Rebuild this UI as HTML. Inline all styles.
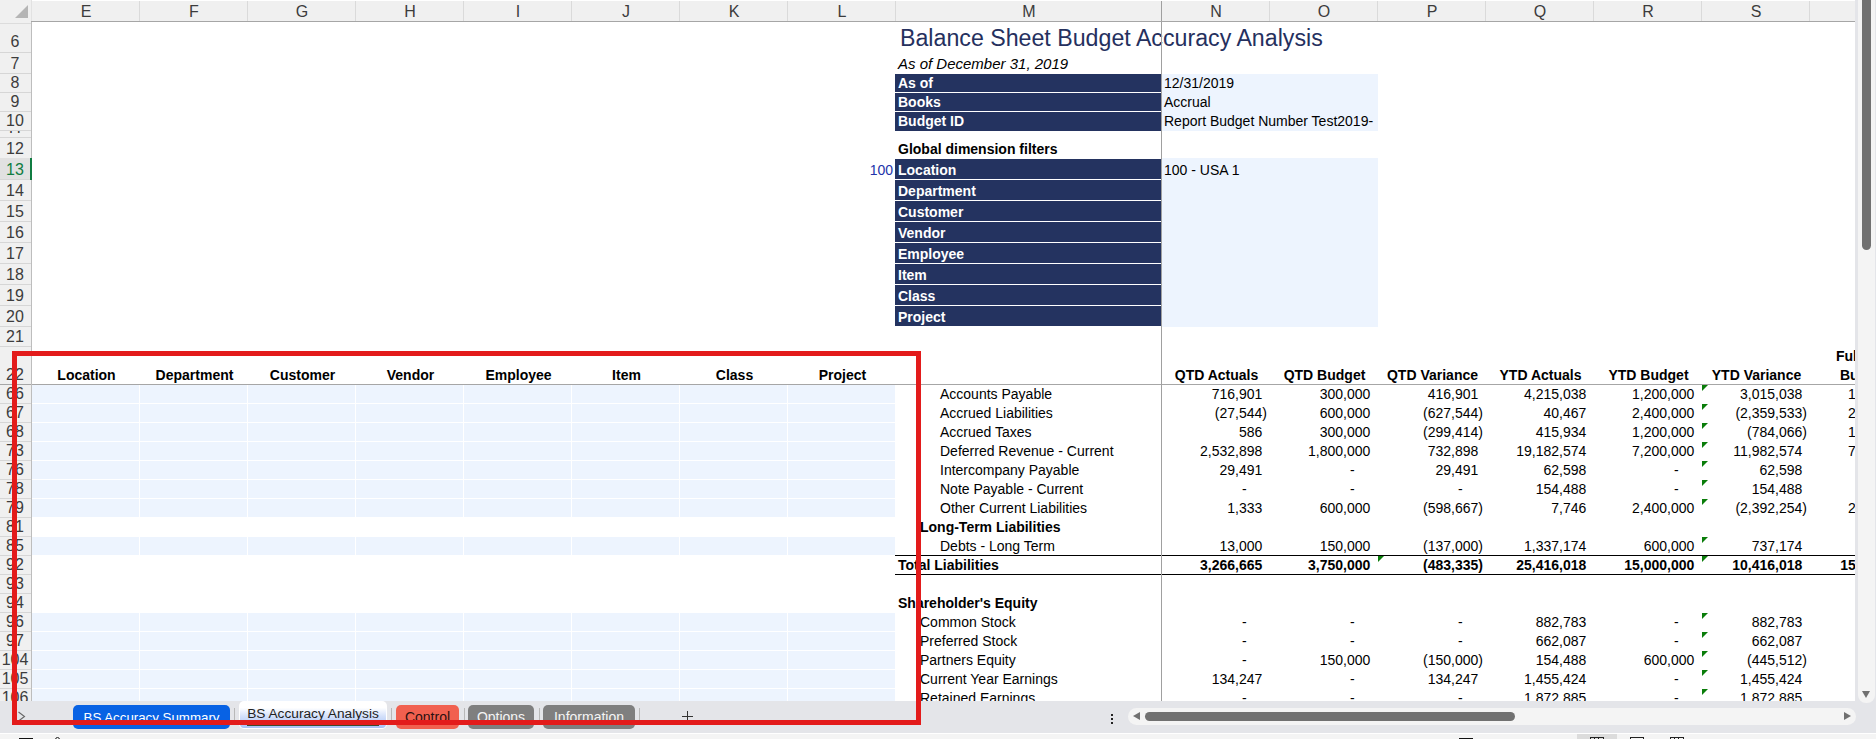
<!DOCTYPE html>
<html><head><meta charset="utf-8"><style>
html,body{margin:0;padding:0;}
body{width:1876px;height:739px;overflow:hidden;position:relative;background:#fff;font-family:"Liberation Sans", sans-serif;}
div{box-sizing:border-box;}
.h{visibility:hidden}
</style></head><body>
<div style="position:absolute;left:0;top:0;width:1855px;height:701px;overflow:hidden;">
<div style="position:absolute;left:32px;top:385px;width:107px;height:18px;background:#EDF4FE;"></div>
<div style="position:absolute;left:140px;top:385px;width:107px;height:18px;background:#EDF4FE;"></div>
<div style="position:absolute;left:248px;top:385px;width:107px;height:18px;background:#EDF4FE;"></div>
<div style="position:absolute;left:356px;top:385px;width:107px;height:18px;background:#EDF4FE;"></div>
<div style="position:absolute;left:464px;top:385px;width:107px;height:18px;background:#EDF4FE;"></div>
<div style="position:absolute;left:572px;top:385px;width:107px;height:18px;background:#EDF4FE;"></div>
<div style="position:absolute;left:680px;top:385px;width:107px;height:18px;background:#EDF4FE;"></div>
<div style="position:absolute;left:788px;top:385px;width:107px;height:18px;background:#EDF4FE;"></div>
<div style="position:absolute;left:32px;top:404px;width:107px;height:18px;background:#EDF4FE;"></div>
<div style="position:absolute;left:140px;top:404px;width:107px;height:18px;background:#EDF4FE;"></div>
<div style="position:absolute;left:248px;top:404px;width:107px;height:18px;background:#EDF4FE;"></div>
<div style="position:absolute;left:356px;top:404px;width:107px;height:18px;background:#EDF4FE;"></div>
<div style="position:absolute;left:464px;top:404px;width:107px;height:18px;background:#EDF4FE;"></div>
<div style="position:absolute;left:572px;top:404px;width:107px;height:18px;background:#EDF4FE;"></div>
<div style="position:absolute;left:680px;top:404px;width:107px;height:18px;background:#EDF4FE;"></div>
<div style="position:absolute;left:788px;top:404px;width:107px;height:18px;background:#EDF4FE;"></div>
<div style="position:absolute;left:32px;top:423px;width:107px;height:18px;background:#EDF4FE;"></div>
<div style="position:absolute;left:140px;top:423px;width:107px;height:18px;background:#EDF4FE;"></div>
<div style="position:absolute;left:248px;top:423px;width:107px;height:18px;background:#EDF4FE;"></div>
<div style="position:absolute;left:356px;top:423px;width:107px;height:18px;background:#EDF4FE;"></div>
<div style="position:absolute;left:464px;top:423px;width:107px;height:18px;background:#EDF4FE;"></div>
<div style="position:absolute;left:572px;top:423px;width:107px;height:18px;background:#EDF4FE;"></div>
<div style="position:absolute;left:680px;top:423px;width:107px;height:18px;background:#EDF4FE;"></div>
<div style="position:absolute;left:788px;top:423px;width:107px;height:18px;background:#EDF4FE;"></div>
<div style="position:absolute;left:32px;top:442px;width:107px;height:18px;background:#EDF4FE;"></div>
<div style="position:absolute;left:140px;top:442px;width:107px;height:18px;background:#EDF4FE;"></div>
<div style="position:absolute;left:248px;top:442px;width:107px;height:18px;background:#EDF4FE;"></div>
<div style="position:absolute;left:356px;top:442px;width:107px;height:18px;background:#EDF4FE;"></div>
<div style="position:absolute;left:464px;top:442px;width:107px;height:18px;background:#EDF4FE;"></div>
<div style="position:absolute;left:572px;top:442px;width:107px;height:18px;background:#EDF4FE;"></div>
<div style="position:absolute;left:680px;top:442px;width:107px;height:18px;background:#EDF4FE;"></div>
<div style="position:absolute;left:788px;top:442px;width:107px;height:18px;background:#EDF4FE;"></div>
<div style="position:absolute;left:32px;top:461px;width:107px;height:18px;background:#EDF4FE;"></div>
<div style="position:absolute;left:140px;top:461px;width:107px;height:18px;background:#EDF4FE;"></div>
<div style="position:absolute;left:248px;top:461px;width:107px;height:18px;background:#EDF4FE;"></div>
<div style="position:absolute;left:356px;top:461px;width:107px;height:18px;background:#EDF4FE;"></div>
<div style="position:absolute;left:464px;top:461px;width:107px;height:18px;background:#EDF4FE;"></div>
<div style="position:absolute;left:572px;top:461px;width:107px;height:18px;background:#EDF4FE;"></div>
<div style="position:absolute;left:680px;top:461px;width:107px;height:18px;background:#EDF4FE;"></div>
<div style="position:absolute;left:788px;top:461px;width:107px;height:18px;background:#EDF4FE;"></div>
<div style="position:absolute;left:32px;top:480px;width:107px;height:18px;background:#EDF4FE;"></div>
<div style="position:absolute;left:140px;top:480px;width:107px;height:18px;background:#EDF4FE;"></div>
<div style="position:absolute;left:248px;top:480px;width:107px;height:18px;background:#EDF4FE;"></div>
<div style="position:absolute;left:356px;top:480px;width:107px;height:18px;background:#EDF4FE;"></div>
<div style="position:absolute;left:464px;top:480px;width:107px;height:18px;background:#EDF4FE;"></div>
<div style="position:absolute;left:572px;top:480px;width:107px;height:18px;background:#EDF4FE;"></div>
<div style="position:absolute;left:680px;top:480px;width:107px;height:18px;background:#EDF4FE;"></div>
<div style="position:absolute;left:788px;top:480px;width:107px;height:18px;background:#EDF4FE;"></div>
<div style="position:absolute;left:32px;top:499px;width:107px;height:18px;background:#EDF4FE;"></div>
<div style="position:absolute;left:140px;top:499px;width:107px;height:18px;background:#EDF4FE;"></div>
<div style="position:absolute;left:248px;top:499px;width:107px;height:18px;background:#EDF4FE;"></div>
<div style="position:absolute;left:356px;top:499px;width:107px;height:18px;background:#EDF4FE;"></div>
<div style="position:absolute;left:464px;top:499px;width:107px;height:18px;background:#EDF4FE;"></div>
<div style="position:absolute;left:572px;top:499px;width:107px;height:18px;background:#EDF4FE;"></div>
<div style="position:absolute;left:680px;top:499px;width:107px;height:18px;background:#EDF4FE;"></div>
<div style="position:absolute;left:788px;top:499px;width:107px;height:18px;background:#EDF4FE;"></div>
<div style="position:absolute;left:32px;top:537px;width:107px;height:18px;background:#EDF4FE;"></div>
<div style="position:absolute;left:140px;top:537px;width:107px;height:18px;background:#EDF4FE;"></div>
<div style="position:absolute;left:248px;top:537px;width:107px;height:18px;background:#EDF4FE;"></div>
<div style="position:absolute;left:356px;top:537px;width:107px;height:18px;background:#EDF4FE;"></div>
<div style="position:absolute;left:464px;top:537px;width:107px;height:18px;background:#EDF4FE;"></div>
<div style="position:absolute;left:572px;top:537px;width:107px;height:18px;background:#EDF4FE;"></div>
<div style="position:absolute;left:680px;top:537px;width:107px;height:18px;background:#EDF4FE;"></div>
<div style="position:absolute;left:788px;top:537px;width:107px;height:18px;background:#EDF4FE;"></div>
<div style="position:absolute;left:32px;top:613px;width:107px;height:18px;background:#EDF4FE;"></div>
<div style="position:absolute;left:140px;top:613px;width:107px;height:18px;background:#EDF4FE;"></div>
<div style="position:absolute;left:248px;top:613px;width:107px;height:18px;background:#EDF4FE;"></div>
<div style="position:absolute;left:356px;top:613px;width:107px;height:18px;background:#EDF4FE;"></div>
<div style="position:absolute;left:464px;top:613px;width:107px;height:18px;background:#EDF4FE;"></div>
<div style="position:absolute;left:572px;top:613px;width:107px;height:18px;background:#EDF4FE;"></div>
<div style="position:absolute;left:680px;top:613px;width:107px;height:18px;background:#EDF4FE;"></div>
<div style="position:absolute;left:788px;top:613px;width:107px;height:18px;background:#EDF4FE;"></div>
<div style="position:absolute;left:32px;top:632px;width:107px;height:18px;background:#EDF4FE;"></div>
<div style="position:absolute;left:140px;top:632px;width:107px;height:18px;background:#EDF4FE;"></div>
<div style="position:absolute;left:248px;top:632px;width:107px;height:18px;background:#EDF4FE;"></div>
<div style="position:absolute;left:356px;top:632px;width:107px;height:18px;background:#EDF4FE;"></div>
<div style="position:absolute;left:464px;top:632px;width:107px;height:18px;background:#EDF4FE;"></div>
<div style="position:absolute;left:572px;top:632px;width:107px;height:18px;background:#EDF4FE;"></div>
<div style="position:absolute;left:680px;top:632px;width:107px;height:18px;background:#EDF4FE;"></div>
<div style="position:absolute;left:788px;top:632px;width:107px;height:18px;background:#EDF4FE;"></div>
<div style="position:absolute;left:32px;top:651px;width:107px;height:18px;background:#EDF4FE;"></div>
<div style="position:absolute;left:140px;top:651px;width:107px;height:18px;background:#EDF4FE;"></div>
<div style="position:absolute;left:248px;top:651px;width:107px;height:18px;background:#EDF4FE;"></div>
<div style="position:absolute;left:356px;top:651px;width:107px;height:18px;background:#EDF4FE;"></div>
<div style="position:absolute;left:464px;top:651px;width:107px;height:18px;background:#EDF4FE;"></div>
<div style="position:absolute;left:572px;top:651px;width:107px;height:18px;background:#EDF4FE;"></div>
<div style="position:absolute;left:680px;top:651px;width:107px;height:18px;background:#EDF4FE;"></div>
<div style="position:absolute;left:788px;top:651px;width:107px;height:18px;background:#EDF4FE;"></div>
<div style="position:absolute;left:32px;top:670px;width:107px;height:18px;background:#EDF4FE;"></div>
<div style="position:absolute;left:140px;top:670px;width:107px;height:18px;background:#EDF4FE;"></div>
<div style="position:absolute;left:248px;top:670px;width:107px;height:18px;background:#EDF4FE;"></div>
<div style="position:absolute;left:356px;top:670px;width:107px;height:18px;background:#EDF4FE;"></div>
<div style="position:absolute;left:464px;top:670px;width:107px;height:18px;background:#EDF4FE;"></div>
<div style="position:absolute;left:572px;top:670px;width:107px;height:18px;background:#EDF4FE;"></div>
<div style="position:absolute;left:680px;top:670px;width:107px;height:18px;background:#EDF4FE;"></div>
<div style="position:absolute;left:788px;top:670px;width:107px;height:18px;background:#EDF4FE;"></div>
<div style="position:absolute;left:32px;top:689px;width:107px;height:18px;background:#EDF4FE;"></div>
<div style="position:absolute;left:140px;top:689px;width:107px;height:18px;background:#EDF4FE;"></div>
<div style="position:absolute;left:248px;top:689px;width:107px;height:18px;background:#EDF4FE;"></div>
<div style="position:absolute;left:356px;top:689px;width:107px;height:18px;background:#EDF4FE;"></div>
<div style="position:absolute;left:464px;top:689px;width:107px;height:18px;background:#EDF4FE;"></div>
<div style="position:absolute;left:572px;top:689px;width:107px;height:18px;background:#EDF4FE;"></div>
<div style="position:absolute;left:680px;top:689px;width:107px;height:18px;background:#EDF4FE;"></div>
<div style="position:absolute;left:788px;top:689px;width:107px;height:18px;background:#EDF4FE;"></div>
<div style="position:absolute;left:895px;top:74px;width:266px;height:18px;background:#243360;"></div>
<div style="position:absolute;left:895px;top:93px;width:266px;height:18px;background:#243360;"></div>
<div style="position:absolute;left:895px;top:112px;width:266px;height:19px;background:#243360;"></div>
<div style="position:absolute;left:895px;top:159px;width:266px;height:20px;background:#243360;"></div>
<div style="position:absolute;left:895px;top:180px;width:266px;height:20px;background:#243360;"></div>
<div style="position:absolute;left:895px;top:201px;width:266px;height:20px;background:#243360;"></div>
<div style="position:absolute;left:895px;top:222px;width:266px;height:20px;background:#243360;"></div>
<div style="position:absolute;left:895px;top:243px;width:266px;height:20px;background:#243360;"></div>
<div style="position:absolute;left:895px;top:264px;width:266px;height:20px;background:#243360;"></div>
<div style="position:absolute;left:895px;top:285px;width:266px;height:20px;background:#243360;"></div>
<div style="position:absolute;left:895px;top:306px;width:266px;height:20px;background:#243360;"></div>
<div style="position:absolute;left:1162px;top:74px;width:216px;height:57px;background:#EDF4FE;"></div>
<div style="position:absolute;left:1162px;top:158px;width:216px;height:169px;background:#EDF4FE;"></div>
<div style="position:absolute;left:900px;top:27.63px;height:20px;line-height:20px;font-size:23px;font-weight:normal;font-style:normal;color:#25305E;white-space:pre;transform:scaleX(1.008);transform-origin:0 0;">Balance Sheet Budget Accuracy Analysis</div>
<div style="position:absolute;left:898px;top:54.30px;height:20px;line-height:20px;font-size:15px;font-weight:normal;font-style:italic;color:#000;white-space:pre;">As of December 31, 2019</div>
<div style="position:absolute;left:898px;top:73.15px;height:20px;line-height:20px;font-size:14px;font-weight:bold;font-style:normal;color:#fff;white-space:pre;">As of</div>
<div style="position:absolute;left:898px;top:92.15px;height:20px;line-height:20px;font-size:14px;font-weight:bold;font-style:normal;color:#fff;white-space:pre;">Books</div>
<div style="position:absolute;left:898px;top:111.15px;height:20px;line-height:20px;font-size:14px;font-weight:bold;font-style:normal;color:#fff;white-space:pre;">Budget ID</div>
<div style="position:absolute;left:1164px;top:73.15px;height:20px;line-height:20px;font-size:14px;font-weight:normal;font-style:normal;color:#000;white-space:pre;">12/31/2019</div>
<div style="position:absolute;left:1164px;top:92.15px;height:20px;line-height:20px;font-size:14px;font-weight:normal;font-style:normal;color:#000;white-space:pre;">Accrual</div>
<div style="position:absolute;left:1164px;top:111.15px;height:20px;line-height:20px;font-size:14px;font-weight:normal;font-style:normal;color:#000;white-space:pre;">Report Budget Number Test2019-</div>
<div style="position:absolute;left:898px;top:138.65px;height:20px;line-height:20px;font-size:14px;font-weight:bold;font-style:normal;color:#000;white-space:pre;">Global dimension filters</div>
<div style="position:absolute;left:898px;top:160.15px;height:20px;line-height:20px;font-size:14px;font-weight:bold;font-style:normal;color:#fff;white-space:pre;">Location</div>
<div style="position:absolute;left:898px;top:181.15px;height:20px;line-height:20px;font-size:14px;font-weight:bold;font-style:normal;color:#fff;white-space:pre;">Department</div>
<div style="position:absolute;left:898px;top:202.15px;height:20px;line-height:20px;font-size:14px;font-weight:bold;font-style:normal;color:#fff;white-space:pre;">Customer</div>
<div style="position:absolute;left:898px;top:223.15px;height:20px;line-height:20px;font-size:14px;font-weight:bold;font-style:normal;color:#fff;white-space:pre;">Vendor</div>
<div style="position:absolute;left:898px;top:244.15px;height:20px;line-height:20px;font-size:14px;font-weight:bold;font-style:normal;color:#fff;white-space:pre;">Employee</div>
<div style="position:absolute;left:898px;top:265.15px;height:20px;line-height:20px;font-size:14px;font-weight:bold;font-style:normal;color:#fff;white-space:pre;">Item</div>
<div style="position:absolute;left:898px;top:286.15px;height:20px;line-height:20px;font-size:14px;font-weight:bold;font-style:normal;color:#fff;white-space:pre;">Class</div>
<div style="position:absolute;left:898px;top:307.15px;height:20px;line-height:20px;font-size:14px;font-weight:bold;font-style:normal;color:#fff;white-space:pre;">Project</div>
<div style="position:absolute;left:293px;width:600px;text-align:right;top:160.15px;height:20px;line-height:20px;font-size:14px;font-weight:normal;font-style:normal;color:#2233AA;white-space:pre;">100</div>
<div style="position:absolute;left:1164px;top:160.15px;height:20px;line-height:20px;font-size:14px;font-weight:normal;font-style:normal;color:#000;white-space:pre;">100 - USA 1</div>
<div style="position:absolute;left:-213.5px;width:600px;text-align:center;top:365.15px;height:20px;line-height:20px;font-size:14px;font-weight:bold;font-style:normal;color:#000;white-space:pre;">Location</div>
<div style="position:absolute;left:-105.5px;width:600px;text-align:center;top:365.15px;height:20px;line-height:20px;font-size:14px;font-weight:bold;font-style:normal;color:#000;white-space:pre;">Department</div>
<div style="position:absolute;left:2.5px;width:600px;text-align:center;top:365.15px;height:20px;line-height:20px;font-size:14px;font-weight:bold;font-style:normal;color:#000;white-space:pre;">Customer</div>
<div style="position:absolute;left:110.5px;width:600px;text-align:center;top:365.15px;height:20px;line-height:20px;font-size:14px;font-weight:bold;font-style:normal;color:#000;white-space:pre;">Vendor</div>
<div style="position:absolute;left:218.5px;width:600px;text-align:center;top:365.15px;height:20px;line-height:20px;font-size:14px;font-weight:bold;font-style:normal;color:#000;white-space:pre;">Employee</div>
<div style="position:absolute;left:326.5px;width:600px;text-align:center;top:365.15px;height:20px;line-height:20px;font-size:14px;font-weight:bold;font-style:normal;color:#000;white-space:pre;">Item</div>
<div style="position:absolute;left:434.5px;width:600px;text-align:center;top:365.15px;height:20px;line-height:20px;font-size:14px;font-weight:bold;font-style:normal;color:#000;white-space:pre;">Class</div>
<div style="position:absolute;left:542.5px;width:600px;text-align:center;top:365.15px;height:20px;line-height:20px;font-size:14px;font-weight:bold;font-style:normal;color:#000;white-space:pre;">Project</div>
<div style="position:absolute;left:916.5px;width:600px;text-align:center;top:365.15px;height:20px;line-height:20px;font-size:14px;font-weight:bold;font-style:normal;color:#000;white-space:pre;">QTD Actuals</div>
<div style="position:absolute;left:1024.5px;width:600px;text-align:center;top:365.15px;height:20px;line-height:20px;font-size:14px;font-weight:bold;font-style:normal;color:#000;white-space:pre;">QTD Budget</div>
<div style="position:absolute;left:1132.5px;width:600px;text-align:center;top:365.15px;height:20px;line-height:20px;font-size:14px;font-weight:bold;font-style:normal;color:#000;white-space:pre;">QTD Variance</div>
<div style="position:absolute;left:1240.5px;width:600px;text-align:center;top:365.15px;height:20px;line-height:20px;font-size:14px;font-weight:bold;font-style:normal;color:#000;white-space:pre;">YTD Actuals</div>
<div style="position:absolute;left:1348.5px;width:600px;text-align:center;top:365.15px;height:20px;line-height:20px;font-size:14px;font-weight:bold;font-style:normal;color:#000;white-space:pre;">YTD Budget</div>
<div style="position:absolute;left:1456.5px;width:600px;text-align:center;top:365.15px;height:20px;line-height:20px;font-size:14px;font-weight:bold;font-style:normal;color:#000;white-space:pre;">YTD Variance</div>
<div style="position:absolute;left:1836px;top:346.15px;height:20px;line-height:20px;font-size:14px;font-weight:bold;font-style:normal;color:#000;white-space:pre;">Full</div>
<div style="position:absolute;left:1840px;top:365.15px;height:20px;line-height:20px;font-size:14px;font-weight:bold;font-style:normal;color:#000;white-space:pre;">Budget</div>
<div style="position:absolute;left:940px;top:383.95px;height:20px;line-height:20px;font-size:14px;font-weight:normal;font-style:normal;color:#000;white-space:pre;">Accounts Payable</div>
<div style="position:absolute;left:667px;width:600px;text-align:right;top:383.95px;height:20px;line-height:20px;font-size:14px;font-weight:normal;font-style:normal;color:#000;white-space:pre;">716,901<span class="h">)</span></div>
<div style="position:absolute;left:775px;width:600px;text-align:right;top:383.95px;height:20px;line-height:20px;font-size:14px;font-weight:normal;font-style:normal;color:#000;white-space:pre;">300,000<span class="h">)</span></div>
<div style="position:absolute;left:883px;width:600px;text-align:right;top:383.95px;height:20px;line-height:20px;font-size:14px;font-weight:normal;font-style:normal;color:#000;white-space:pre;">416,901<span class="h">)</span></div>
<div style="position:absolute;left:991px;width:600px;text-align:right;top:383.95px;height:20px;line-height:20px;font-size:14px;font-weight:normal;font-style:normal;color:#000;white-space:pre;">4,215,038<span class="h">)</span></div>
<div style="position:absolute;left:1099px;width:600px;text-align:right;top:383.95px;height:20px;line-height:20px;font-size:14px;font-weight:normal;font-style:normal;color:#000;white-space:pre;">1,200,000<span class="h">)</span></div>
<div style="position:absolute;left:1207px;width:600px;text-align:right;top:383.95px;height:20px;line-height:20px;font-size:14px;font-weight:normal;font-style:normal;color:#000;white-space:pre;">3,015,038<span class="h">)</span></div>
<div style="position:absolute;left:1315px;width:600px;text-align:right;top:383.95px;height:20px;line-height:20px;font-size:14px;font-weight:normal;font-style:normal;color:#000;white-space:pre;">1,200,000<span class="h">)</span></div>
<div style="position:absolute;left:940px;top:402.95px;height:20px;line-height:20px;font-size:14px;font-weight:normal;font-style:normal;color:#000;white-space:pre;">Accrued Liabilities</div>
<div style="position:absolute;left:667px;width:600px;text-align:right;top:402.95px;height:20px;line-height:20px;font-size:14px;font-weight:normal;font-style:normal;color:#000;white-space:pre;">(27,544)</div>
<div style="position:absolute;left:775px;width:600px;text-align:right;top:402.95px;height:20px;line-height:20px;font-size:14px;font-weight:normal;font-style:normal;color:#000;white-space:pre;">600,000<span class="h">)</span></div>
<div style="position:absolute;left:883px;width:600px;text-align:right;top:402.95px;height:20px;line-height:20px;font-size:14px;font-weight:normal;font-style:normal;color:#000;white-space:pre;">(627,544)</div>
<div style="position:absolute;left:991px;width:600px;text-align:right;top:402.95px;height:20px;line-height:20px;font-size:14px;font-weight:normal;font-style:normal;color:#000;white-space:pre;">40,467<span class="h">)</span></div>
<div style="position:absolute;left:1099px;width:600px;text-align:right;top:402.95px;height:20px;line-height:20px;font-size:14px;font-weight:normal;font-style:normal;color:#000;white-space:pre;">2,400,000<span class="h">)</span></div>
<div style="position:absolute;left:1207px;width:600px;text-align:right;top:402.95px;height:20px;line-height:20px;font-size:14px;font-weight:normal;font-style:normal;color:#000;white-space:pre;">(2,359,533)</div>
<div style="position:absolute;left:1315px;width:600px;text-align:right;top:402.95px;height:20px;line-height:20px;font-size:14px;font-weight:normal;font-style:normal;color:#000;white-space:pre;">2,400,000<span class="h">)</span></div>
<div style="position:absolute;left:940px;top:421.95px;height:20px;line-height:20px;font-size:14px;font-weight:normal;font-style:normal;color:#000;white-space:pre;">Accrued Taxes</div>
<div style="position:absolute;left:667px;width:600px;text-align:right;top:421.95px;height:20px;line-height:20px;font-size:14px;font-weight:normal;font-style:normal;color:#000;white-space:pre;">586<span class="h">)</span></div>
<div style="position:absolute;left:775px;width:600px;text-align:right;top:421.95px;height:20px;line-height:20px;font-size:14px;font-weight:normal;font-style:normal;color:#000;white-space:pre;">300,000<span class="h">)</span></div>
<div style="position:absolute;left:883px;width:600px;text-align:right;top:421.95px;height:20px;line-height:20px;font-size:14px;font-weight:normal;font-style:normal;color:#000;white-space:pre;">(299,414)</div>
<div style="position:absolute;left:991px;width:600px;text-align:right;top:421.95px;height:20px;line-height:20px;font-size:14px;font-weight:normal;font-style:normal;color:#000;white-space:pre;">415,934<span class="h">)</span></div>
<div style="position:absolute;left:1099px;width:600px;text-align:right;top:421.95px;height:20px;line-height:20px;font-size:14px;font-weight:normal;font-style:normal;color:#000;white-space:pre;">1,200,000<span class="h">)</span></div>
<div style="position:absolute;left:1207px;width:600px;text-align:right;top:421.95px;height:20px;line-height:20px;font-size:14px;font-weight:normal;font-style:normal;color:#000;white-space:pre;">(784,066)</div>
<div style="position:absolute;left:1315px;width:600px;text-align:right;top:421.95px;height:20px;line-height:20px;font-size:14px;font-weight:normal;font-style:normal;color:#000;white-space:pre;">1,200,000<span class="h">)</span></div>
<div style="position:absolute;left:940px;top:440.95px;height:20px;line-height:20px;font-size:14px;font-weight:normal;font-style:normal;color:#000;white-space:pre;">Deferred Revenue - Current</div>
<div style="position:absolute;left:667px;width:600px;text-align:right;top:440.95px;height:20px;line-height:20px;font-size:14px;font-weight:normal;font-style:normal;color:#000;white-space:pre;">2,532,898<span class="h">)</span></div>
<div style="position:absolute;left:775px;width:600px;text-align:right;top:440.95px;height:20px;line-height:20px;font-size:14px;font-weight:normal;font-style:normal;color:#000;white-space:pre;">1,800,000<span class="h">)</span></div>
<div style="position:absolute;left:883px;width:600px;text-align:right;top:440.95px;height:20px;line-height:20px;font-size:14px;font-weight:normal;font-style:normal;color:#000;white-space:pre;">732,898<span class="h">)</span></div>
<div style="position:absolute;left:991px;width:600px;text-align:right;top:440.95px;height:20px;line-height:20px;font-size:14px;font-weight:normal;font-style:normal;color:#000;white-space:pre;">19,182,574<span class="h">)</span></div>
<div style="position:absolute;left:1099px;width:600px;text-align:right;top:440.95px;height:20px;line-height:20px;font-size:14px;font-weight:normal;font-style:normal;color:#000;white-space:pre;">7,200,000<span class="h">)</span></div>
<div style="position:absolute;left:1207px;width:600px;text-align:right;top:440.95px;height:20px;line-height:20px;font-size:14px;font-weight:normal;font-style:normal;color:#000;white-space:pre;">11,982,574<span class="h">)</span></div>
<div style="position:absolute;left:1315px;width:600px;text-align:right;top:440.95px;height:20px;line-height:20px;font-size:14px;font-weight:normal;font-style:normal;color:#000;white-space:pre;">7,200,000<span class="h">)</span></div>
<div style="position:absolute;left:940px;top:459.95px;height:20px;line-height:20px;font-size:14px;font-weight:normal;font-style:normal;color:#000;white-space:pre;">Intercompany Payable</div>
<div style="position:absolute;left:667px;width:600px;text-align:right;top:459.95px;height:20px;line-height:20px;font-size:14px;font-weight:normal;font-style:normal;color:#000;white-space:pre;">29,491<span class="h">)</span></div>
<div style="position:absolute;left:775px;width:600px;text-align:right;top:459.95px;height:20px;line-height:20px;font-size:14px;font-weight:normal;font-style:normal;color:#000;white-space:pre;">-<span class="h">00)</span></div>
<div style="position:absolute;left:883px;width:600px;text-align:right;top:459.95px;height:20px;line-height:20px;font-size:14px;font-weight:normal;font-style:normal;color:#000;white-space:pre;">29,491<span class="h">)</span></div>
<div style="position:absolute;left:991px;width:600px;text-align:right;top:459.95px;height:20px;line-height:20px;font-size:14px;font-weight:normal;font-style:normal;color:#000;white-space:pre;">62,598<span class="h">)</span></div>
<div style="position:absolute;left:1099px;width:600px;text-align:right;top:459.95px;height:20px;line-height:20px;font-size:14px;font-weight:normal;font-style:normal;color:#000;white-space:pre;">-<span class="h">00)</span></div>
<div style="position:absolute;left:1207px;width:600px;text-align:right;top:459.95px;height:20px;line-height:20px;font-size:14px;font-weight:normal;font-style:normal;color:#000;white-space:pre;">62,598<span class="h">)</span></div>
<div style="position:absolute;left:1315px;width:600px;text-align:right;top:459.95px;height:20px;line-height:20px;font-size:14px;font-weight:normal;font-style:normal;color:#000;white-space:pre;">-<span class="h">00)</span></div>
<div style="position:absolute;left:940px;top:478.95px;height:20px;line-height:20px;font-size:14px;font-weight:normal;font-style:normal;color:#000;white-space:pre;">Note Payable - Current</div>
<div style="position:absolute;left:667px;width:600px;text-align:right;top:478.95px;height:20px;line-height:20px;font-size:14px;font-weight:normal;font-style:normal;color:#000;white-space:pre;">-<span class="h">00)</span></div>
<div style="position:absolute;left:775px;width:600px;text-align:right;top:478.95px;height:20px;line-height:20px;font-size:14px;font-weight:normal;font-style:normal;color:#000;white-space:pre;">-<span class="h">00)</span></div>
<div style="position:absolute;left:883px;width:600px;text-align:right;top:478.95px;height:20px;line-height:20px;font-size:14px;font-weight:normal;font-style:normal;color:#000;white-space:pre;">-<span class="h">00)</span></div>
<div style="position:absolute;left:991px;width:600px;text-align:right;top:478.95px;height:20px;line-height:20px;font-size:14px;font-weight:normal;font-style:normal;color:#000;white-space:pre;">154,488<span class="h">)</span></div>
<div style="position:absolute;left:1099px;width:600px;text-align:right;top:478.95px;height:20px;line-height:20px;font-size:14px;font-weight:normal;font-style:normal;color:#000;white-space:pre;">-<span class="h">00)</span></div>
<div style="position:absolute;left:1207px;width:600px;text-align:right;top:478.95px;height:20px;line-height:20px;font-size:14px;font-weight:normal;font-style:normal;color:#000;white-space:pre;">154,488<span class="h">)</span></div>
<div style="position:absolute;left:1315px;width:600px;text-align:right;top:478.95px;height:20px;line-height:20px;font-size:14px;font-weight:normal;font-style:normal;color:#000;white-space:pre;">-<span class="h">00)</span></div>
<div style="position:absolute;left:940px;top:497.95px;height:20px;line-height:20px;font-size:14px;font-weight:normal;font-style:normal;color:#000;white-space:pre;">Other Current Liabilities</div>
<div style="position:absolute;left:667px;width:600px;text-align:right;top:497.95px;height:20px;line-height:20px;font-size:14px;font-weight:normal;font-style:normal;color:#000;white-space:pre;">1,333<span class="h">)</span></div>
<div style="position:absolute;left:775px;width:600px;text-align:right;top:497.95px;height:20px;line-height:20px;font-size:14px;font-weight:normal;font-style:normal;color:#000;white-space:pre;">600,000<span class="h">)</span></div>
<div style="position:absolute;left:883px;width:600px;text-align:right;top:497.95px;height:20px;line-height:20px;font-size:14px;font-weight:normal;font-style:normal;color:#000;white-space:pre;">(598,667)</div>
<div style="position:absolute;left:991px;width:600px;text-align:right;top:497.95px;height:20px;line-height:20px;font-size:14px;font-weight:normal;font-style:normal;color:#000;white-space:pre;">7,746<span class="h">)</span></div>
<div style="position:absolute;left:1099px;width:600px;text-align:right;top:497.95px;height:20px;line-height:20px;font-size:14px;font-weight:normal;font-style:normal;color:#000;white-space:pre;">2,400,000<span class="h">)</span></div>
<div style="position:absolute;left:1207px;width:600px;text-align:right;top:497.95px;height:20px;line-height:20px;font-size:14px;font-weight:normal;font-style:normal;color:#000;white-space:pre;">(2,392,254)</div>
<div style="position:absolute;left:1315px;width:600px;text-align:right;top:497.95px;height:20px;line-height:20px;font-size:14px;font-weight:normal;font-style:normal;color:#000;white-space:pre;">2,400,000<span class="h">)</span></div>
<div style="position:absolute;left:920px;top:516.95px;height:20px;line-height:20px;font-size:14px;font-weight:bold;font-style:normal;color:#000;white-space:pre;">Long-Term Liabilities</div>
<div style="position:absolute;left:940px;top:535.95px;height:20px;line-height:20px;font-size:14px;font-weight:normal;font-style:normal;color:#000;white-space:pre;">Debts - Long Term</div>
<div style="position:absolute;left:667px;width:600px;text-align:right;top:535.95px;height:20px;line-height:20px;font-size:14px;font-weight:normal;font-style:normal;color:#000;white-space:pre;">13,000<span class="h">)</span></div>
<div style="position:absolute;left:775px;width:600px;text-align:right;top:535.95px;height:20px;line-height:20px;font-size:14px;font-weight:normal;font-style:normal;color:#000;white-space:pre;">150,000<span class="h">)</span></div>
<div style="position:absolute;left:883px;width:600px;text-align:right;top:535.95px;height:20px;line-height:20px;font-size:14px;font-weight:normal;font-style:normal;color:#000;white-space:pre;">(137,000)</div>
<div style="position:absolute;left:991px;width:600px;text-align:right;top:535.95px;height:20px;line-height:20px;font-size:14px;font-weight:normal;font-style:normal;color:#000;white-space:pre;">1,337,174<span class="h">)</span></div>
<div style="position:absolute;left:1099px;width:600px;text-align:right;top:535.95px;height:20px;line-height:20px;font-size:14px;font-weight:normal;font-style:normal;color:#000;white-space:pre;">600,000<span class="h">)</span></div>
<div style="position:absolute;left:1207px;width:600px;text-align:right;top:535.95px;height:20px;line-height:20px;font-size:14px;font-weight:normal;font-style:normal;color:#000;white-space:pre;">737,174<span class="h">)</span></div>
<div style="position:absolute;left:1315px;width:600px;text-align:right;top:535.95px;height:20px;line-height:20px;font-size:14px;font-weight:normal;font-style:normal;color:#000;white-space:pre;">600,000<span class="h">)</span></div>
<div style="position:absolute;left:898px;top:554.95px;height:20px;line-height:20px;font-size:14px;font-weight:bold;font-style:normal;color:#000;white-space:pre;">Total Liabilities</div>
<div style="position:absolute;left:667px;width:600px;text-align:right;top:554.95px;height:20px;line-height:20px;font-size:14px;font-weight:bold;font-style:normal;color:#000;white-space:pre;">3,266,665<span class="h">)</span></div>
<div style="position:absolute;left:775px;width:600px;text-align:right;top:554.95px;height:20px;line-height:20px;font-size:14px;font-weight:bold;font-style:normal;color:#000;white-space:pre;">3,750,000<span class="h">)</span></div>
<div style="position:absolute;left:883px;width:600px;text-align:right;top:554.95px;height:20px;line-height:20px;font-size:14px;font-weight:bold;font-style:normal;color:#000;white-space:pre;">(483,335)</div>
<div style="position:absolute;left:991px;width:600px;text-align:right;top:554.95px;height:20px;line-height:20px;font-size:14px;font-weight:bold;font-style:normal;color:#000;white-space:pre;">25,416,018<span class="h">)</span></div>
<div style="position:absolute;left:1099px;width:600px;text-align:right;top:554.95px;height:20px;line-height:20px;font-size:14px;font-weight:bold;font-style:normal;color:#000;white-space:pre;">15,000,000<span class="h">)</span></div>
<div style="position:absolute;left:1207px;width:600px;text-align:right;top:554.95px;height:20px;line-height:20px;font-size:14px;font-weight:bold;font-style:normal;color:#000;white-space:pre;">10,416,018<span class="h">)</span></div>
<div style="position:absolute;left:1315px;width:600px;text-align:right;top:554.95px;height:20px;line-height:20px;font-size:14px;font-weight:bold;font-style:normal;color:#000;white-space:pre;">15,000,000<span class="h">)</span></div>
<div style="position:absolute;left:898px;top:592.95px;height:20px;line-height:20px;font-size:14px;font-weight:bold;font-style:normal;color:#000;white-space:pre;">Shareholder's Equity</div>
<div style="position:absolute;left:920px;top:611.95px;height:20px;line-height:20px;font-size:14px;font-weight:normal;font-style:normal;color:#000;white-space:pre;">Common Stock</div>
<div style="position:absolute;left:667px;width:600px;text-align:right;top:611.95px;height:20px;line-height:20px;font-size:14px;font-weight:normal;font-style:normal;color:#000;white-space:pre;">-<span class="h">00)</span></div>
<div style="position:absolute;left:775px;width:600px;text-align:right;top:611.95px;height:20px;line-height:20px;font-size:14px;font-weight:normal;font-style:normal;color:#000;white-space:pre;">-<span class="h">00)</span></div>
<div style="position:absolute;left:883px;width:600px;text-align:right;top:611.95px;height:20px;line-height:20px;font-size:14px;font-weight:normal;font-style:normal;color:#000;white-space:pre;">-<span class="h">00)</span></div>
<div style="position:absolute;left:991px;width:600px;text-align:right;top:611.95px;height:20px;line-height:20px;font-size:14px;font-weight:normal;font-style:normal;color:#000;white-space:pre;">882,783<span class="h">)</span></div>
<div style="position:absolute;left:1099px;width:600px;text-align:right;top:611.95px;height:20px;line-height:20px;font-size:14px;font-weight:normal;font-style:normal;color:#000;white-space:pre;">-<span class="h">00)</span></div>
<div style="position:absolute;left:1207px;width:600px;text-align:right;top:611.95px;height:20px;line-height:20px;font-size:14px;font-weight:normal;font-style:normal;color:#000;white-space:pre;">882,783<span class="h">)</span></div>
<div style="position:absolute;left:1315px;width:600px;text-align:right;top:611.95px;height:20px;line-height:20px;font-size:14px;font-weight:normal;font-style:normal;color:#000;white-space:pre;">-<span class="h">00)</span></div>
<div style="position:absolute;left:920px;top:630.95px;height:20px;line-height:20px;font-size:14px;font-weight:normal;font-style:normal;color:#000;white-space:pre;">Preferred Stock</div>
<div style="position:absolute;left:667px;width:600px;text-align:right;top:630.95px;height:20px;line-height:20px;font-size:14px;font-weight:normal;font-style:normal;color:#000;white-space:pre;">-<span class="h">00)</span></div>
<div style="position:absolute;left:775px;width:600px;text-align:right;top:630.95px;height:20px;line-height:20px;font-size:14px;font-weight:normal;font-style:normal;color:#000;white-space:pre;">-<span class="h">00)</span></div>
<div style="position:absolute;left:883px;width:600px;text-align:right;top:630.95px;height:20px;line-height:20px;font-size:14px;font-weight:normal;font-style:normal;color:#000;white-space:pre;">-<span class="h">00)</span></div>
<div style="position:absolute;left:991px;width:600px;text-align:right;top:630.95px;height:20px;line-height:20px;font-size:14px;font-weight:normal;font-style:normal;color:#000;white-space:pre;">662,087<span class="h">)</span></div>
<div style="position:absolute;left:1099px;width:600px;text-align:right;top:630.95px;height:20px;line-height:20px;font-size:14px;font-weight:normal;font-style:normal;color:#000;white-space:pre;">-<span class="h">00)</span></div>
<div style="position:absolute;left:1207px;width:600px;text-align:right;top:630.95px;height:20px;line-height:20px;font-size:14px;font-weight:normal;font-style:normal;color:#000;white-space:pre;">662,087<span class="h">)</span></div>
<div style="position:absolute;left:1315px;width:600px;text-align:right;top:630.95px;height:20px;line-height:20px;font-size:14px;font-weight:normal;font-style:normal;color:#000;white-space:pre;">-<span class="h">00)</span></div>
<div style="position:absolute;left:920px;top:649.95px;height:20px;line-height:20px;font-size:14px;font-weight:normal;font-style:normal;color:#000;white-space:pre;">Partners Equity</div>
<div style="position:absolute;left:667px;width:600px;text-align:right;top:649.95px;height:20px;line-height:20px;font-size:14px;font-weight:normal;font-style:normal;color:#000;white-space:pre;">-<span class="h">00)</span></div>
<div style="position:absolute;left:775px;width:600px;text-align:right;top:649.95px;height:20px;line-height:20px;font-size:14px;font-weight:normal;font-style:normal;color:#000;white-space:pre;">150,000<span class="h">)</span></div>
<div style="position:absolute;left:883px;width:600px;text-align:right;top:649.95px;height:20px;line-height:20px;font-size:14px;font-weight:normal;font-style:normal;color:#000;white-space:pre;">(150,000)</div>
<div style="position:absolute;left:991px;width:600px;text-align:right;top:649.95px;height:20px;line-height:20px;font-size:14px;font-weight:normal;font-style:normal;color:#000;white-space:pre;">154,488<span class="h">)</span></div>
<div style="position:absolute;left:1099px;width:600px;text-align:right;top:649.95px;height:20px;line-height:20px;font-size:14px;font-weight:normal;font-style:normal;color:#000;white-space:pre;">600,000<span class="h">)</span></div>
<div style="position:absolute;left:1207px;width:600px;text-align:right;top:649.95px;height:20px;line-height:20px;font-size:14px;font-weight:normal;font-style:normal;color:#000;white-space:pre;">(445,512)</div>
<div style="position:absolute;left:1315px;width:600px;text-align:right;top:649.95px;height:20px;line-height:20px;font-size:14px;font-weight:normal;font-style:normal;color:#000;white-space:pre;">600,000<span class="h">)</span></div>
<div style="position:absolute;left:920px;top:668.95px;height:20px;line-height:20px;font-size:14px;font-weight:normal;font-style:normal;color:#000;white-space:pre;">Current Year Earnings</div>
<div style="position:absolute;left:667px;width:600px;text-align:right;top:668.95px;height:20px;line-height:20px;font-size:14px;font-weight:normal;font-style:normal;color:#000;white-space:pre;">134,247<span class="h">)</span></div>
<div style="position:absolute;left:775px;width:600px;text-align:right;top:668.95px;height:20px;line-height:20px;font-size:14px;font-weight:normal;font-style:normal;color:#000;white-space:pre;">-<span class="h">00)</span></div>
<div style="position:absolute;left:883px;width:600px;text-align:right;top:668.95px;height:20px;line-height:20px;font-size:14px;font-weight:normal;font-style:normal;color:#000;white-space:pre;">134,247<span class="h">)</span></div>
<div style="position:absolute;left:991px;width:600px;text-align:right;top:668.95px;height:20px;line-height:20px;font-size:14px;font-weight:normal;font-style:normal;color:#000;white-space:pre;">1,455,424<span class="h">)</span></div>
<div style="position:absolute;left:1099px;width:600px;text-align:right;top:668.95px;height:20px;line-height:20px;font-size:14px;font-weight:normal;font-style:normal;color:#000;white-space:pre;">-<span class="h">00)</span></div>
<div style="position:absolute;left:1207px;width:600px;text-align:right;top:668.95px;height:20px;line-height:20px;font-size:14px;font-weight:normal;font-style:normal;color:#000;white-space:pre;">1,455,424<span class="h">)</span></div>
<div style="position:absolute;left:1315px;width:600px;text-align:right;top:668.95px;height:20px;line-height:20px;font-size:14px;font-weight:normal;font-style:normal;color:#000;white-space:pre;">-<span class="h">00)</span></div>
<div style="position:absolute;left:920px;top:687.95px;height:20px;line-height:20px;font-size:14px;font-weight:normal;font-style:normal;color:#000;white-space:pre;">Retained Earnings</div>
<div style="position:absolute;left:667px;width:600px;text-align:right;top:687.95px;height:20px;line-height:20px;font-size:14px;font-weight:normal;font-style:normal;color:#000;white-space:pre;">-<span class="h">00)</span></div>
<div style="position:absolute;left:775px;width:600px;text-align:right;top:687.95px;height:20px;line-height:20px;font-size:14px;font-weight:normal;font-style:normal;color:#000;white-space:pre;">-<span class="h">00)</span></div>
<div style="position:absolute;left:883px;width:600px;text-align:right;top:687.95px;height:20px;line-height:20px;font-size:14px;font-weight:normal;font-style:normal;color:#000;white-space:pre;">-<span class="h">00)</span></div>
<div style="position:absolute;left:991px;width:600px;text-align:right;top:687.95px;height:20px;line-height:20px;font-size:14px;font-weight:normal;font-style:normal;color:#000;white-space:pre;">1,872,885<span class="h">)</span></div>
<div style="position:absolute;left:1099px;width:600px;text-align:right;top:687.95px;height:20px;line-height:20px;font-size:14px;font-weight:normal;font-style:normal;color:#000;white-space:pre;">-<span class="h">00)</span></div>
<div style="position:absolute;left:1207px;width:600px;text-align:right;top:687.95px;height:20px;line-height:20px;font-size:14px;font-weight:normal;font-style:normal;color:#000;white-space:pre;">1,872,885<span class="h">)</span></div>
<div style="position:absolute;left:1315px;width:600px;text-align:right;top:687.95px;height:20px;line-height:20px;font-size:14px;font-weight:normal;font-style:normal;color:#000;white-space:pre;">-<span class="h">00)</span></div>
<div style="position:absolute;left:895px;top:555px;width:960px;height:1px;background:#000;"></div>
<div style="position:absolute;left:895px;top:574px;width:960px;height:1px;background:#000;"></div>
<div style="position:absolute;left:1702px;top:385px;width:0;height:0;border-top:6px solid #0A7D0A;border-right:6px solid transparent;"></div>
<div style="position:absolute;left:1702px;top:404px;width:0;height:0;border-top:6px solid #0A7D0A;border-right:6px solid transparent;"></div>
<div style="position:absolute;left:1702px;top:423px;width:0;height:0;border-top:6px solid #0A7D0A;border-right:6px solid transparent;"></div>
<div style="position:absolute;left:1702px;top:442px;width:0;height:0;border-top:6px solid #0A7D0A;border-right:6px solid transparent;"></div>
<div style="position:absolute;left:1702px;top:461px;width:0;height:0;border-top:6px solid #0A7D0A;border-right:6px solid transparent;"></div>
<div style="position:absolute;left:1702px;top:480px;width:0;height:0;border-top:6px solid #0A7D0A;border-right:6px solid transparent;"></div>
<div style="position:absolute;left:1702px;top:499px;width:0;height:0;border-top:6px solid #0A7D0A;border-right:6px solid transparent;"></div>
<div style="position:absolute;left:1702px;top:537px;width:0;height:0;border-top:6px solid #0A7D0A;border-right:6px solid transparent;"></div>
<div style="position:absolute;left:1702px;top:556px;width:0;height:0;border-top:6px solid #0A7D0A;border-right:6px solid transparent;"></div>
<div style="position:absolute;left:1702px;top:613px;width:0;height:0;border-top:6px solid #0A7D0A;border-right:6px solid transparent;"></div>
<div style="position:absolute;left:1702px;top:632px;width:0;height:0;border-top:6px solid #0A7D0A;border-right:6px solid transparent;"></div>
<div style="position:absolute;left:1702px;top:651px;width:0;height:0;border-top:6px solid #0A7D0A;border-right:6px solid transparent;"></div>
<div style="position:absolute;left:1702px;top:670px;width:0;height:0;border-top:6px solid #0A7D0A;border-right:6px solid transparent;"></div>
<div style="position:absolute;left:1702px;top:689px;width:0;height:0;border-top:6px solid #0A7D0A;border-right:6px solid transparent;"></div>
<div style="position:absolute;left:1378px;top:556px;width:0;height:0;border-top:6px solid #0A7D0A;border-right:6px solid transparent;"></div>
<div style="position:absolute;left:0px;top:384px;width:1855px;height:1px;background:#A6A6A6;"></div>
<div style="position:absolute;left:1161px;top:22px;width:1px;height:679px;background:#A0A0A0;"></div>
<div style="position:absolute;left:0px;top:0px;width:1855px;height:22px;background:#F0F0F0;"></div>
<div style="position:absolute;left:31px;top:0px;width:1824px;height:1px;background:#FFFFFF;"></div>
<div style="position:absolute;left:31px;top:0px;width:1px;height:22px;background:#E2E2E2;"></div>
<div style="position:absolute;left:31px;top:21px;width:1824px;height:1px;background:#A6A6A6;"></div>
<div style="position:absolute;left:139px;top:1px;width:1px;height:20px;background:#DADADA;"></div>
<div style="position:absolute;left:247px;top:1px;width:1px;height:20px;background:#DADADA;"></div>
<div style="position:absolute;left:355px;top:1px;width:1px;height:20px;background:#DADADA;"></div>
<div style="position:absolute;left:463px;top:1px;width:1px;height:20px;background:#DADADA;"></div>
<div style="position:absolute;left:571px;top:1px;width:1px;height:20px;background:#DADADA;"></div>
<div style="position:absolute;left:679px;top:1px;width:1px;height:20px;background:#DADADA;"></div>
<div style="position:absolute;left:787px;top:1px;width:1px;height:20px;background:#DADADA;"></div>
<div style="position:absolute;left:895px;top:1px;width:1px;height:20px;background:#DADADA;"></div>
<div style="position:absolute;left:1161px;top:1px;width:1px;height:20px;background:#A0A0A0;"></div>
<div style="position:absolute;left:1269px;top:1px;width:1px;height:20px;background:#DADADA;"></div>
<div style="position:absolute;left:1377px;top:1px;width:1px;height:20px;background:#DADADA;"></div>
<div style="position:absolute;left:1485px;top:1px;width:1px;height:20px;background:#DADADA;"></div>
<div style="position:absolute;left:1593px;top:1px;width:1px;height:20px;background:#DADADA;"></div>
<div style="position:absolute;left:1701px;top:1px;width:1px;height:20px;background:#DADADA;"></div>
<div style="position:absolute;left:1809px;top:1px;width:1px;height:20px;background:#DADADA;"></div>
<div style="position:absolute;left:-214.0px;width:600px;text-align:center;top:1.66px;height:20px;line-height:20px;font-size:16px;font-weight:normal;font-style:normal;color:#3C3C3C;white-space:pre;">E</div>
<div style="position:absolute;left:-106.0px;width:600px;text-align:center;top:1.66px;height:20px;line-height:20px;font-size:16px;font-weight:normal;font-style:normal;color:#3C3C3C;white-space:pre;">F</div>
<div style="position:absolute;left:2.0px;width:600px;text-align:center;top:1.66px;height:20px;line-height:20px;font-size:16px;font-weight:normal;font-style:normal;color:#3C3C3C;white-space:pre;">G</div>
<div style="position:absolute;left:110.0px;width:600px;text-align:center;top:1.66px;height:20px;line-height:20px;font-size:16px;font-weight:normal;font-style:normal;color:#3C3C3C;white-space:pre;">H</div>
<div style="position:absolute;left:218.0px;width:600px;text-align:center;top:1.66px;height:20px;line-height:20px;font-size:16px;font-weight:normal;font-style:normal;color:#3C3C3C;white-space:pre;">I</div>
<div style="position:absolute;left:326.0px;width:600px;text-align:center;top:1.66px;height:20px;line-height:20px;font-size:16px;font-weight:normal;font-style:normal;color:#3C3C3C;white-space:pre;">J</div>
<div style="position:absolute;left:434.0px;width:600px;text-align:center;top:1.66px;height:20px;line-height:20px;font-size:16px;font-weight:normal;font-style:normal;color:#3C3C3C;white-space:pre;">K</div>
<div style="position:absolute;left:542.0px;width:600px;text-align:center;top:1.66px;height:20px;line-height:20px;font-size:16px;font-weight:normal;font-style:normal;color:#3C3C3C;white-space:pre;">L</div>
<div style="position:absolute;left:729.0px;width:600px;text-align:center;top:1.66px;height:20px;line-height:20px;font-size:16px;font-weight:normal;font-style:normal;color:#3C3C3C;white-space:pre;">M</div>
<div style="position:absolute;left:916.0px;width:600px;text-align:center;top:1.66px;height:20px;line-height:20px;font-size:16px;font-weight:normal;font-style:normal;color:#3C3C3C;white-space:pre;">N</div>
<div style="position:absolute;left:1024.0px;width:600px;text-align:center;top:1.66px;height:20px;line-height:20px;font-size:16px;font-weight:normal;font-style:normal;color:#3C3C3C;white-space:pre;">O</div>
<div style="position:absolute;left:1132.0px;width:600px;text-align:center;top:1.66px;height:20px;line-height:20px;font-size:16px;font-weight:normal;font-style:normal;color:#3C3C3C;white-space:pre;">P</div>
<div style="position:absolute;left:1240.0px;width:600px;text-align:center;top:1.66px;height:20px;line-height:20px;font-size:16px;font-weight:normal;font-style:normal;color:#3C3C3C;white-space:pre;">Q</div>
<div style="position:absolute;left:1348.0px;width:600px;text-align:center;top:1.66px;height:20px;line-height:20px;font-size:16px;font-weight:normal;font-style:normal;color:#3C3C3C;white-space:pre;">R</div>
<div style="position:absolute;left:1456.0px;width:600px;text-align:center;top:1.66px;height:20px;line-height:20px;font-size:16px;font-weight:normal;font-style:normal;color:#3C3C3C;white-space:pre;">S</div>
<div style="position:absolute;left:15px;top:5px;width:0;height:0;border-bottom:13px solid #B5B5B5;border-left:13px solid transparent;"></div>
<div style="position:absolute;left:0px;top:22px;width:31px;height:679px;background:#F0F0F0;"></div>
<div style="position:absolute;left:31px;top:22px;width:1px;height:679px;background:#BDBDBD;"></div>
<div style="position:absolute;left:0px;top:23px;width:31px;height:1px;background:#DCDCDC;"></div>
<div style="position:absolute;left:0px;top:52px;width:31px;height:1px;background:#D6D6D6;"></div>
<div style="position:absolute;left:0px;top:73px;width:31px;height:1px;background:#D6D6D6;"></div>
<div style="position:absolute;left:0px;top:92px;width:31px;height:1px;background:#D6D6D6;"></div>
<div style="position:absolute;left:0px;top:111px;width:31px;height:1px;background:#D6D6D6;"></div>
<div style="position:absolute;left:0px;top:130px;width:31px;height:1px;background:#D6D6D6;"></div>
<div style="position:absolute;left:0px;top:137px;width:31px;height:1px;background:#D6D6D6;"></div>
<div style="position:absolute;left:0px;top:158px;width:31px;height:1px;background:#D6D6D6;"></div>
<div style="position:absolute;left:0px;top:179px;width:31px;height:1px;background:#D6D6D6;"></div>
<div style="position:absolute;left:0px;top:200px;width:31px;height:1px;background:#D6D6D6;"></div>
<div style="position:absolute;left:0px;top:221px;width:31px;height:1px;background:#D6D6D6;"></div>
<div style="position:absolute;left:0px;top:242px;width:31px;height:1px;background:#D6D6D6;"></div>
<div style="position:absolute;left:0px;top:263px;width:31px;height:1px;background:#D6D6D6;"></div>
<div style="position:absolute;left:0px;top:284px;width:31px;height:1px;background:#D6D6D6;"></div>
<div style="position:absolute;left:0px;top:305px;width:31px;height:1px;background:#D6D6D6;"></div>
<div style="position:absolute;left:0px;top:326px;width:31px;height:1px;background:#D6D6D6;"></div>
<div style="position:absolute;left:0px;top:346px;width:31px;height:1px;background:#D6D6D6;"></div>
<div style="position:absolute;left:0px;top:384px;width:31px;height:1px;background:#D6D6D6;"></div>
<div style="position:absolute;left:0px;top:403px;width:31px;height:1px;background:#D6D6D6;"></div>
<div style="position:absolute;left:0px;top:422px;width:31px;height:1px;background:#D6D6D6;"></div>
<div style="position:absolute;left:0px;top:441px;width:31px;height:1px;background:#D6D6D6;"></div>
<div style="position:absolute;left:0px;top:460px;width:31px;height:1px;background:#D6D6D6;"></div>
<div style="position:absolute;left:0px;top:479px;width:31px;height:1px;background:#D6D6D6;"></div>
<div style="position:absolute;left:0px;top:498px;width:31px;height:1px;background:#D6D6D6;"></div>
<div style="position:absolute;left:0px;top:517px;width:31px;height:1px;background:#D6D6D6;"></div>
<div style="position:absolute;left:0px;top:536px;width:31px;height:1px;background:#D6D6D6;"></div>
<div style="position:absolute;left:0px;top:555px;width:31px;height:1px;background:#D6D6D6;"></div>
<div style="position:absolute;left:0px;top:574px;width:31px;height:1px;background:#D6D6D6;"></div>
<div style="position:absolute;left:0px;top:593px;width:31px;height:1px;background:#D6D6D6;"></div>
<div style="position:absolute;left:0px;top:612px;width:31px;height:1px;background:#D6D6D6;"></div>
<div style="position:absolute;left:0px;top:631px;width:31px;height:1px;background:#D6D6D6;"></div>
<div style="position:absolute;left:0px;top:650px;width:31px;height:1px;background:#D6D6D6;"></div>
<div style="position:absolute;left:0px;top:669px;width:31px;height:1px;background:#D6D6D6;"></div>
<div style="position:absolute;left:0px;top:688px;width:31px;height:1px;background:#D6D6D6;"></div>
<div style="position:absolute;left:0px;top:707px;width:31px;height:1px;background:#D6D6D6;"></div>
<div style="position:absolute;left:0px;top:158px;width:31px;height:21px;background:#E1E1E1;"></div>
<div style="position:absolute;left:30px;top:158px;width:2px;height:22px;background:#107C41;"></div>
<div style="position:absolute;left:0px;top:384px;width:31px;height:1px;background:#A6A6A6;"></div>
<div style="position:absolute;left:-285px;width:600px;text-align:center;top:32.46px;height:20px;line-height:20px;font-size:16px;font-weight:normal;font-style:normal;color:#3C3C3C;white-space:pre;">6</div>
<div style="position:absolute;left:-285px;width:600px;text-align:center;top:53.96px;height:20px;line-height:20px;font-size:16px;font-weight:normal;font-style:normal;color:#3C3C3C;white-space:pre;">7</div>
<div style="position:absolute;left:-285px;width:600px;text-align:center;top:72.96px;height:20px;line-height:20px;font-size:16px;font-weight:normal;font-style:normal;color:#3C3C3C;white-space:pre;">8</div>
<div style="position:absolute;left:-285px;width:600px;text-align:center;top:91.96px;height:20px;line-height:20px;font-size:16px;font-weight:normal;font-style:normal;color:#3C3C3C;white-space:pre;">9</div>
<div style="position:absolute;left:-285px;width:600px;text-align:center;top:110.96px;height:20px;line-height:20px;font-size:16px;font-weight:normal;font-style:normal;color:#3C3C3C;white-space:pre;">10</div>
<div style="position:absolute;left:0;top:131px;width:31px;height:2px;overflow:hidden;">
<div style="position:absolute;left:-1px;width:31px;text-align:center;top:-9.0px;height:20px;line-height:20px;font-size:16px;color:#333;">11</div></div>
<div style="position:absolute;left:-285px;width:600px;text-align:center;top:138.96px;height:20px;line-height:20px;font-size:16px;font-weight:normal;font-style:normal;color:#3C3C3C;white-space:pre;">12</div>
<div style="position:absolute;left:-285px;width:600px;text-align:center;top:159.96px;height:20px;line-height:20px;font-size:16px;font-weight:normal;font-style:normal;color:#107C41;white-space:pre;">13</div>
<div style="position:absolute;left:-285px;width:600px;text-align:center;top:180.96px;height:20px;line-height:20px;font-size:16px;font-weight:normal;font-style:normal;color:#3C3C3C;white-space:pre;">14</div>
<div style="position:absolute;left:-285px;width:600px;text-align:center;top:201.96px;height:20px;line-height:20px;font-size:16px;font-weight:normal;font-style:normal;color:#3C3C3C;white-space:pre;">15</div>
<div style="position:absolute;left:-285px;width:600px;text-align:center;top:222.96px;height:20px;line-height:20px;font-size:16px;font-weight:normal;font-style:normal;color:#3C3C3C;white-space:pre;">16</div>
<div style="position:absolute;left:-285px;width:600px;text-align:center;top:243.96px;height:20px;line-height:20px;font-size:16px;font-weight:normal;font-style:normal;color:#3C3C3C;white-space:pre;">17</div>
<div style="position:absolute;left:-285px;width:600px;text-align:center;top:264.96px;height:20px;line-height:20px;font-size:16px;font-weight:normal;font-style:normal;color:#3C3C3C;white-space:pre;">18</div>
<div style="position:absolute;left:-285px;width:600px;text-align:center;top:285.96px;height:20px;line-height:20px;font-size:16px;font-weight:normal;font-style:normal;color:#3C3C3C;white-space:pre;">19</div>
<div style="position:absolute;left:-285px;width:600px;text-align:center;top:306.96px;height:20px;line-height:20px;font-size:16px;font-weight:normal;font-style:normal;color:#3C3C3C;white-space:pre;">20</div>
<div style="position:absolute;left:-285px;width:600px;text-align:center;top:326.96px;height:20px;line-height:20px;font-size:16px;font-weight:normal;font-style:normal;color:#3C3C3C;white-space:pre;">21</div>
<div style="position:absolute;left:-285px;width:600px;text-align:center;top:364.96px;height:20px;line-height:20px;font-size:16px;font-weight:normal;font-style:normal;color:#3C3C3C;white-space:pre;">22</div>
<div style="position:absolute;left:-285px;width:600px;text-align:center;top:383.96px;height:20px;line-height:20px;font-size:16px;font-weight:normal;font-style:normal;color:#3C3C3C;white-space:pre;">66</div>
<div style="position:absolute;left:-285px;width:600px;text-align:center;top:402.96px;height:20px;line-height:20px;font-size:16px;font-weight:normal;font-style:normal;color:#3C3C3C;white-space:pre;">67</div>
<div style="position:absolute;left:-285px;width:600px;text-align:center;top:421.96px;height:20px;line-height:20px;font-size:16px;font-weight:normal;font-style:normal;color:#3C3C3C;white-space:pre;">68</div>
<div style="position:absolute;left:-285px;width:600px;text-align:center;top:440.96px;height:20px;line-height:20px;font-size:16px;font-weight:normal;font-style:normal;color:#3C3C3C;white-space:pre;">73</div>
<div style="position:absolute;left:-285px;width:600px;text-align:center;top:459.96px;height:20px;line-height:20px;font-size:16px;font-weight:normal;font-style:normal;color:#3C3C3C;white-space:pre;">76</div>
<div style="position:absolute;left:-285px;width:600px;text-align:center;top:478.96px;height:20px;line-height:20px;font-size:16px;font-weight:normal;font-style:normal;color:#3C3C3C;white-space:pre;">78</div>
<div style="position:absolute;left:-285px;width:600px;text-align:center;top:497.96px;height:20px;line-height:20px;font-size:16px;font-weight:normal;font-style:normal;color:#3C3C3C;white-space:pre;">79</div>
<div style="position:absolute;left:-285px;width:600px;text-align:center;top:516.96px;height:20px;line-height:20px;font-size:16px;font-weight:normal;font-style:normal;color:#3C3C3C;white-space:pre;">81</div>
<div style="position:absolute;left:-285px;width:600px;text-align:center;top:535.96px;height:20px;line-height:20px;font-size:16px;font-weight:normal;font-style:normal;color:#3C3C3C;white-space:pre;">85</div>
<div style="position:absolute;left:-285px;width:600px;text-align:center;top:554.96px;height:20px;line-height:20px;font-size:16px;font-weight:normal;font-style:normal;color:#3C3C3C;white-space:pre;">92</div>
<div style="position:absolute;left:-285px;width:600px;text-align:center;top:573.96px;height:20px;line-height:20px;font-size:16px;font-weight:normal;font-style:normal;color:#3C3C3C;white-space:pre;">93</div>
<div style="position:absolute;left:-285px;width:600px;text-align:center;top:592.96px;height:20px;line-height:20px;font-size:16px;font-weight:normal;font-style:normal;color:#3C3C3C;white-space:pre;">94</div>
<div style="position:absolute;left:-285px;width:600px;text-align:center;top:611.96px;height:20px;line-height:20px;font-size:16px;font-weight:normal;font-style:normal;color:#3C3C3C;white-space:pre;">96</div>
<div style="position:absolute;left:-285px;width:600px;text-align:center;top:630.96px;height:20px;line-height:20px;font-size:16px;font-weight:normal;font-style:normal;color:#3C3C3C;white-space:pre;">97</div>
<div style="position:absolute;left:-285px;width:600px;text-align:center;top:649.96px;height:20px;line-height:20px;font-size:16px;font-weight:normal;font-style:normal;color:#3C3C3C;white-space:pre;">104</div>
<div style="position:absolute;left:-285px;width:600px;text-align:center;top:668.96px;height:20px;line-height:20px;font-size:16px;font-weight:normal;font-style:normal;color:#3C3C3C;white-space:pre;">105</div>
<div style="position:absolute;left:-285px;width:600px;text-align:center;top:687.96px;height:20px;line-height:20px;font-size:16px;font-weight:normal;font-style:normal;color:#3C3C3C;white-space:pre;">106</div>
</div>
<div style="position:absolute;left:0px;top:701px;width:1876px;height:32px;background:#E4E5E9;"></div>
<div style="position:absolute;left:0px;top:733px;width:1876px;height:6px;background:#F4F4F4;"></div>
<div style="position:absolute;left:0px;top:733px;width:1876px;height:1px;background:#FFFFFF;"></div>
<div style="position:absolute;left:1855px;top:0px;width:21px;height:701px;background:#E4E5E9;"></div>
<div style="position:absolute;left:1858px;top:-10px;width:17px;height:713px;background:#F4F4F4;border-radius:8px;"></div>
<div style="position:absolute;left:1862px;top:-10px;width:9px;height:260px;background:#717171;border-radius:4.5px;"></div>
<div style="position:absolute;left:1862px;top:691px;width:0;height:0;border-top:7px solid #707070;border-left:4.5px solid transparent;border-right:4.5px solid transparent;"></div>
<svg style="position:absolute;left:16px;top:710px" width="12" height="13" viewBox="0 0 12 13"><path d="M2.5 2 L8.5 6.5 L2.5 11" fill="none" stroke="#666" stroke-width="1.1"/></svg>
<div style="position:absolute;left:73px;top:705px;width:157px;height:24px;background:#0862E4;border-radius:5px;"></div>
<div style="position:absolute;left:-148.5px;width:600px;text-align:center;top:707.15px;height:20px;line-height:20px;font-size:14px;font-weight:normal;font-style:normal;color:#FFFFFF;white-space:pre;"><span style="font-size:13.3px">BS Accuracy Summary</span></div>
<div style="position:absolute;left:239px;top:701px;width:148px;height:28px;background:#fff;border-radius:5px;"></div>
<div style="position:absolute;left:240px;top:702px;width:146px;height:26px;background:linear-gradient(#FFFFFF 0%, #FFFFFF 22%, #D3E0FA 55%, #A8C1F6 100%);border-radius:4px;"></div>
<div style="position:absolute;left:13px;width:600px;text-align:center;top:704.25px;height:20px;line-height:20px;font-size:13.7px;font-weight:normal;font-style:normal;color:#222;white-space:pre;">BS Accuracy Analysis</div>
<div style="position:absolute;left:247px;top:724px;width:132px;height:2px;background:#3F4A2E;"></div>
<div style="position:absolute;left:396px;top:705px;width:63px;height:24px;background:#F1604F;border-radius:5px;"></div>
<div style="position:absolute;left:127.5px;width:600px;text-align:center;top:707.15px;height:20px;line-height:20px;font-size:14px;font-weight:normal;font-style:normal;color:#2A1010;white-space:pre;">Control</div>
<div style="position:absolute;left:468px;top:705px;width:66px;height:24px;background:#7F7F7F;border-radius:5px;"></div>
<div style="position:absolute;left:201.0px;width:600px;text-align:center;top:707.15px;height:20px;line-height:20px;font-size:14px;font-weight:normal;font-style:normal;color:#F4F4F4;white-space:pre;">Options</div>
<div style="position:absolute;left:543px;top:705px;width:92px;height:24px;background:#7F7F7F;border-radius:5px;"></div>
<div style="position:absolute;left:289.0px;width:600px;text-align:center;top:707.15px;height:20px;line-height:20px;font-size:14px;font-weight:normal;font-style:normal;color:#F4F4F4;white-space:pre;">Information</div>
<div style="position:absolute;left:234px;top:708px;width:1px;height:17px;background:#B8B8B8;"></div>
<div style="position:absolute;left:391px;top:708px;width:1px;height:17px;background:#B8B8B8;"></div>
<div style="position:absolute;left:463.5px;top:708px;width:1px;height:17px;background:#B8B8B8;"></div>
<div style="position:absolute;left:539px;top:708px;width:1px;height:17px;background:#B8B8B8;"></div>
<div style="position:absolute;left:639px;top:708px;width:1px;height:17px;background:#B8B8B8;"></div>
<div style="position:absolute;left:682px;top:715.5px;width:11px;height:1.4px;background:#333;"></div>
<div style="position:absolute;left:686.8px;top:710.5px;width:1.4px;height:11px;background:#333;"></div>
<div style="position:absolute;left:1110.8px;top:713.5px;width:2px;height:2px;background:#222;"></div>
<div style="position:absolute;left:1110.8px;top:717.5px;width:2px;height:2px;background:#222;"></div>
<div style="position:absolute;left:1110.8px;top:721.5px;width:2px;height:2px;background:#222;"></div>
<div style="position:absolute;left:1128px;top:708px;width:728px;height:17px;background:#F4F4F4;border-radius:8.5px;"></div>
<div style="position:absolute;left:1145px;top:712px;width:370px;height:9px;background:#717171;border-radius:4.5px;"></div>
<div style="position:absolute;left:1133px;top:712px;width:0;height:0;border-right:7px solid #707070;border-top:4.5px solid transparent;border-bottom:4.5px solid transparent;"></div>
<div style="position:absolute;left:1844px;top:712px;width:0;height:0;border-left:7px solid #707070;border-top:4.5px solid transparent;border-bottom:4.5px solid transparent;"></div>
<div style="position:absolute;left:19px;top:738px;width:14px;height:1px;background:#111;"></div>
<div style="position:absolute;left:54.5px;top:737.3px;width:5px;height:5px;border:1.3px solid #222;border-radius:50%;"></div>
<div style="position:absolute;left:1459px;top:738px;width:14px;height:1px;background:#111;"></div>
<div style="position:absolute;left:1577px;top:734px;width:40px;height:5px;background:#DCDCDC;"></div>
<div style="position:absolute;left:1590px;top:737px;width:14px;height:2px;background:#222;background:none;border:1px solid #222;border-bottom:none;"></div>
<div style="position:absolute;left:1630px;top:737px;width:14px;height:2px;background:#222;background:none;border:1px solid #222;border-bottom:none;"></div>
<div style="position:absolute;left:1670px;top:737px;width:14px;height:2px;background:#222;background:none;border:1px solid #222;border-bottom:none;"></div>
<div style="position:absolute;left:1594px;top:737px;width:1px;height:2px;background:#222;"></div>
<div style="position:absolute;left:1598px;top:737px;width:1px;height:2px;background:#222;"></div>
<div style="position:absolute;left:1674px;top:737px;width:1px;height:2px;background:#222;"></div>
<div style="position:absolute;left:1678px;top:737px;width:1px;height:2px;background:#222;"></div>
<div style="position:absolute;left:12px;top:351px;width:909px;height:374px;border:5px solid #E31B1B;"></div>
</body></html>
